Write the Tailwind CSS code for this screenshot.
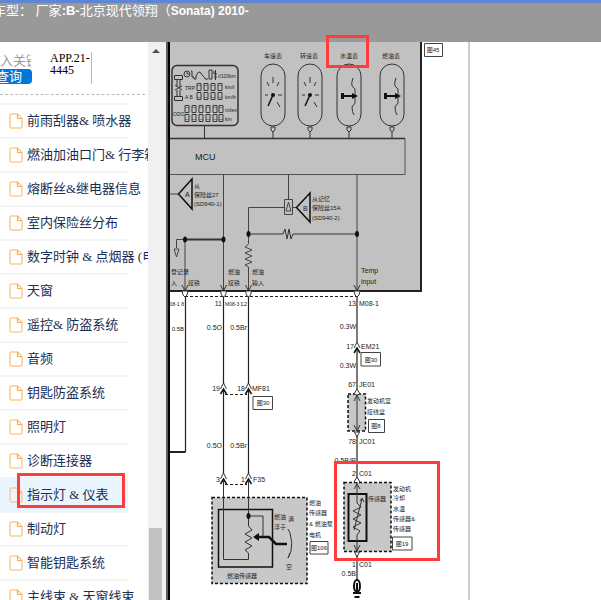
<!DOCTYPE html>
<html lang="zh-CN">
<head>
    <meta charset="UTF-8">
    <meta name="viewport" content="width=device-width, initial-scale=1.0">
    <script src="https://cdn.jsdelivr.net/npm/@tailwindcss/browser@4"></script>
    <title>北京现代领翔 Sonata</title>
</head>
<body class="h-screen flex flex-col overflow-hidden bg-white font-['Liberation_Serif','Noto_Sans_CJK_SC',sans-serif]">
    <!-- Header -->
    <header class="h-[42px] shrink-0 bg-[#999999] border-t-3 border-[#5f86d3] overflow-hidden">
        <h1 class="-ml-[7px] text-[13px] leading-4 text-white whitespace-nowrap font-['Liberation_Sans','Noto_Sans_CJK_SC',sans-serif]">车型： 厂家<b>:B-</b>北京现代领翔（<b class="text-[12px]">Sonata) 2010-</b></h1>
    </header>

    <main class="flex flex-1 min-h-0 relative">
        <!-- Sidebar -->
        <aside class="w-[148px] shrink-0 overflow-hidden text-[13px]">
            <div class="flex h-[53px] mr-[3px] pt-[10px] border-b border-dashed border-[#bbbbbb]">
                <form class="w-[50px] shrink-0">
                    <input class="block w-11 h-[17px] -ml-[13px] text-[13px] text-gray-700 placeholder:text-[#999999] focus:outline-none" type="text" placeholder="输入关键字" aria-label="关键字">
                    <button class="block w-[45px] h-[15px] -ml-[13px] pl-[9px] rounded bg-[#0078d7] text-left text-[13px] leading-[14px] text-white" type="button">查询</button>
                </form>
                <div class="w-[42px] h-8 text-[12px] leading-3 text-black border-r border-[#bbbbbb]">APP.21-<br>4445</div>
            </div>
            <ul class="mt-2 w-32 text-[#1b2d52] whitespace-nowrap" id="menu">
                <li><a href="#" class="flex items-center h-[34px] pl-[9px] gap-1 border-t-2 border-[#f4f4f4]"><svg class="size-[14px] h-4 shrink-0"><use href="#file"/></svg>前雨刮器&amp; 喷水器</a></li>
                <li><a href="#" class="flex items-center h-[34px] pl-[9px] gap-1 border-t-2 border-[#f4f4f4]"><svg class="size-[14px] h-4 shrink-0"><use href="#file"/></svg>燃油加油口门&amp; 行李箱</a></li>
                <li><a href="#" class="flex items-center h-[34px] pl-[9px] gap-1 border-t-2 border-[#f4f4f4]"><svg class="size-[14px] h-4 shrink-0"><use href="#file"/></svg>熔断丝&amp;继电器信息</a></li>
                <li><a href="#" class="flex items-center h-[34px] pl-[9px] gap-1 border-t-2 border-[#f4f4f4]"><svg class="size-[14px] h-4 shrink-0"><use href="#file"/></svg>室内保险丝分布</a></li>
                <li><a href="#" class="flex items-center h-[34px] pl-[9px] gap-1 border-t-2 border-[#f4f4f4]"><svg class="size-[14px] h-4 shrink-0"><use href="#file"/></svg>数字时钟 &amp; 点烟器 (电源)</a></li>
                <li><a href="#" class="flex items-center h-[34px] pl-[9px] gap-1 border-t-2 border-[#f4f4f4]"><svg class="size-[14px] h-4 shrink-0"><use href="#file"/></svg>天窗</a></li>
                <li><a href="#" class="flex items-center h-[34px] pl-[9px] gap-1 border-t-2 border-[#f4f4f4]"><svg class="size-[14px] h-4 shrink-0"><use href="#file"/></svg>遥控&amp; 防盗系统</a></li>
                <li><a href="#" class="flex items-center h-[34px] pl-[9px] gap-1 border-t-2 border-[#f4f4f4]"><svg class="size-[14px] h-4 shrink-0"><use href="#file"/></svg>音频</a></li>
                <li><a href="#" class="flex items-center h-[34px] pl-[9px] gap-1 border-t-2 border-[#f4f4f4]"><svg class="size-[14px] h-4 shrink-0"><use href="#file"/></svg>钥匙防盗系统</a></li>
                <li><a href="#" class="flex items-center h-[34px] pl-[9px] gap-1 border-t-2 border-[#f4f4f4]"><svg class="size-[14px] h-4 shrink-0"><use href="#file"/></svg>照明灯</a></li>
                <li><a href="#" class="flex items-center h-[34px] pl-[9px] gap-1 border-t-2 border-[#f4f4f4]"><svg class="size-[14px] h-4 shrink-0"><use href="#file"/></svg>诊断连接器</a></li>
                <!-- current page -->
                <li class="relative">
                    <a href="#" class="flex items-center h-[34px] pl-[9px] gap-1 border-t-2 border-[#eaf6ff] bg-[#eaf6ff]"><svg class="size-[14px] h-4 shrink-0"><use href="#file"/></svg>指示灯 &amp; 仪表</a>
                    <div class="absolute left-[17px] -top-1 w-[108px] h-[35px] border-3 border-[#ff3b3b]"></div>
                </li>
                <li><a href="#" class="flex items-center h-[34px] pl-[9px] gap-1 border-t-2 border-[#f4f4f4]"><svg class="size-[14px] h-4 shrink-0"><use href="#file"/></svg>制动灯</a></li>
                <li><a href="#" class="flex items-center h-[34px] pl-[9px] gap-1 border-t-2 border-[#f4f4f4]"><svg class="size-[14px] h-4 shrink-0"><use href="#file"/></svg>智能钥匙系统</a></li>
                <li><a href="#" class="flex items-center h-[34px] pl-[9px] gap-1 border-t-2 border-[#f4f4f4]"><svg class="size-[14px] h-4 shrink-0"><use href="#file"/></svg>主线束 &amp; 天窗线束</a></li>
            </ul>
        </aside>

        <!-- Scrollbar -->
        <div class="w-[18px] shrink-0 flex flex-col justify-between items-center bg-[#f0f0f0] pt-[6px] pr-[3px]">
            <svg class="w-2 h-2" viewBox="0 0 8 8"><path d="M0 5 4 1 8 5Z" fill="#505050"/></svg>
            <div class="w-[13px] h-[72px] bg-[#c1c1c1]"></div>
        </div>
        <div class="w-1 shrink-0 bg-black border-l-2 border-[#5c5c5c]"></div>

        <!-- Wiring diagram -->
        <section class="relative flex-1 min-w-0 overflow-hidden">
            <svg class="block w-[300px] h-[558px] border-r-2 border-[#cccccc] font-['Liberation_Sans_Narrow','Liberation_Sans','Noto_Sans_CJK_SC',sans-serif]" viewBox="170 42 298 558" fill="none" stroke="#333333" stroke-width="1">
                <defs>
                    <symbol id="file" viewBox="0 0 14 16">
                        <path d="M2.5 1H8.5L13 5.5V13.5Q13 15 11.5 15H2.5Q1 15 1 13.5V2.5Q1 1 2.5 1Z" fill="none" stroke="#fbcb92" stroke-width="1.5"/>
                        <path d="M8.5 1V5.5H13" fill="none" stroke="#f5ab55" stroke-width="1.2"/>
                    </symbol>
                    <!-- one digit of the LCD -->
                    <g id="seg" stroke="#3a3a3a" stroke-width="1">
                        <path d="M1 .5H5V7.500H1ZM1 9.500H5V16.500H1Z"/>
                        <path d="M1 2.500H5M1 14.500H5" stroke-width=".5"/>
                    </g>
                    <g id="speed">
                        <rect x="-12" y="-31" width="24" height="62" rx="12"/>
                        <path d="M0 -18V-12M-6 -13L-4 -9M6 -13L4 -9M-8 0H-5M5 0H9M4 7L7 12M-2 32V35L0 37L2 35V32ZM0 37V44"/>
                        <path d="M0 0L-5 11" stroke="#111" stroke-width="1.5"/>
                        <circle r="2" fill="#111" stroke="none"/>
                    </g>
                    <g id="level">
                        <rect x="-12" y="-31" width="24" height="62" rx="12"/>
                        <path d="M4 -17Q2 -12 3 -9L6 -6V8L3 12Q3 17 5 20M-2 32V35L0 37L2 35V32ZM0 37V44"/>
                        <path d="M-5 1H4" stroke="#111" stroke-width="2"/>
                        <path d="M-8 -2H-5V4H-8ZM3 -2L9 1L3 4Z" fill="#111" stroke="none"/>
                    </g>
                    <g id="plug">
                        <path d="M-3 -6L0 0L3 -6" />
                        <path d="M-3 0H3L2 4L0 6L-2 4Z" fill="#fff"/>
                    </g>
                    <g id="joint">
                        <path d="M-3 5L0 -1L3 5" fill="#fff"/>
                        <path d="M-3 10L0 5L3 10" stroke="#111" stroke-width="1.500"/>
                    </g>
                </defs>

                <!-- instrument cluster -->
                <path d="M170 42H421V291H170Z" fill="#c1c1c1" stroke="none"/>
                <path d="M421 42V291H170" stroke="#222" stroke-width="2"/>
                <rect x="172" y="65.500" width="66" height="60" rx="5" stroke-width="1.500"/>
                <g>
                    <path d="M174.500 75.500H182.500V79.500H174.500ZM177 80V87M180 80V87M175 85L182 90M175 90L182 86M177 90V96M180 90V96M174.500 96.500H182.500V100.500H174.500Z"/>
                    <circle cx="187" cy="74" r="3"/><path d="M187 72V74H189"/>
                    <path d="M191 71H192V77H194V79H196V76Q198 71 200 72L203 76L205 78V79H208M209 70H212V79H209ZM214 71V74H217M214 77H217M215.500 70V80"/>
                    <use href="#seg" x="196" y="83"/><use href="#seg" x="203" y="83"/><use href="#seg" x="210" y="83"/><use href="#seg" x="217" y="83"/>
                    <use href="#seg" x="184" y="105"/><use href="#seg" x="191" y="105"/><use href="#seg" x="198" y="105"/><use href="#seg" x="205" y="105"/><use href="#seg" x="212" y="105"/><use href="#seg" x="218" y="105"/>
                </g>
                <path d="M204.500 126V138"/>
                <use href="#speed" x="273" y="95"/>
                <use href="#speed" x="310" y="95"/>
                <use href="#level" x="349" y="95"/>
                <use href="#level" x="392" y="95"/>
                <path d="M170 138.500H405V174.500H170" stroke="#555"/>
                <path d="M170 138.500H405" stroke-width="1.500"/>

                <!-- inner wiring -->
                <path d="M170 194H178M223.500 174V290M288.500 174V199M284 207.500H248.500V244L245 247L252 250L245 253L252 256L245 259L252 262L245 265L248.500 267V290M292 207.500H296M357 174V290M176.500 248V239.500H185V290M174 249H179L176.500 257ZM284.500 199.500H292.500V214.500H284.500ZM286 211H291L288.500 202Z" stroke="#444"/>
                <path d="M248 234H283L285 229L287 239L289 229L291 239L293 234H357"/>
                <path d="M185 239.500H223" stroke-width="2"/>
                <path d="M192 179L178.500 194L192 209ZM310 193L296.500 207.500L310 222Z" stroke="#111" stroke-width="1.500"/>
                <g fill="#111" stroke="none">
                    <ellipse cx="185" cy="239.500" rx="2" ry="3"/><ellipse cx="223.500" cy="239.500" rx="2" ry="3"/>
                    <ellipse cx="248.500" cy="234" rx="2" ry="3"/><ellipse cx="357" cy="234" rx="2" ry="3"/>
                </g>

                <!-- harness lines -->
                <g stroke="#222" stroke-width="1.200">
                    <path d="M185.500 296V452H170M223.500 296V384M248.500 296V384M223.500 390V474M248.500 390V474M357 296V342M357 348V389M357 434V481M357 552V580"/>
                    <path d="M170 452H185" stroke-width="2"/>
                    <path d="M185 296.500H357M225 394.500H247M225 484.500H247" stroke-dasharray="3 2"/>
                </g>
                <use href="#plug" x="185" y="291"/><use href="#plug" x="223.500" y="291"/><use href="#plug" x="248.500" y="291"/><use href="#plug" x="357" y="291"/>
                <use href="#joint" x="223.500" y="384"/><use href="#joint" x="248.500" y="384"/>
                <use href="#joint" x="223.500" y="474"/><use href="#joint" x="248.500" y="474"/><use href="#joint" x="357" y="343"/>

                <!-- fuel sender -->
                <rect x="212" y="497.500" width="95" height="86" fill="#c8c8c8" stroke="#111" stroke-width="1.500" stroke-dasharray="3 2"/>
                <rect x="218.500" y="509.500" width="54" height="57.500" stroke="#111" stroke-width="1.500"/>
                <path d="M223.500 480V559.500H248.500V553L245 550L252 546L245 542L252 538L245 534L252 530L248.500 526V480M248.500 516H263V536M288 529L290 533M290 533Q293 543 291 551L288 558L290 553"/>
                <path d="M256 537H269L276 544H287" stroke="#111" stroke-width="2.500"/>
                <path d="M253 537L259 533V541Z" fill="#111" stroke="none"/>
                <ellipse cx="248.500" cy="516" rx="2" ry="3" fill="#111" stroke="none"/>

                <!-- junction box -->
                <rect x="348" y="394" width="17.500" height="37" fill="#c8c8c8" stroke="#111" stroke-width="1.500" stroke-dasharray="3 2"/>
                <path d="M357 394V431M354 401L357 395L360 401M354 425L357 431L360 425"/>
                <path d="M354 394L357 389L360 394M354.500 432H359.500L357 437Z" fill="#fff"/>

                <!-- coolant temperature sensor -->
                <rect x="344" y="482.500" width="47" height="69" fill="#c8c8c8" stroke="#111" stroke-width="1.500" stroke-dasharray="3 2"/>
                <rect x="348.500" y="494" width="18" height="47" stroke="#111" stroke-width="2"/>
                <path d="M357 482V503L361 507L353 511L361 515L353 519L361 523L353 527L360 531L357 535V551M354 489L357 484L360 489M354 545L357 551L360 545M354 530L362 499M360 501L362 498L364 502"/>
                <path d="M354 482L357 477L360 482M354.500 552H359.500L357 557Z" fill="#fff"/>
                <ellipse cx="357" cy="586" rx="3" ry="6" fill="#fff" stroke="#111" stroke-width="2"/>
                <path d="M357 583V592" stroke="#111" stroke-width="2"/>
                <path d="M353 593H361M354.500 597H359.500" stroke="#111" stroke-width="2"/>

                <!-- page reference boxes -->
                <path d="M424.500 43.500H442.500V56.500H424.500ZM253 396.500H272.500V409.500H253ZM361 352.500H380.500V366H361ZM368.500 419.500H384.500V432.500H368.500ZM310 541.500H328V554H310ZM392.500 537H412V550H392.500Z" fill="#fff" stroke="#444"/>

                <!-- labels -->
                <g fill="#222" stroke="none" font-size="7">
                    <text x="195" y="160" font-size="9">MCU</text>
                    <g text-anchor="middle" font-size="6">
                        <text x="273" y="58">车速表</text><text x="309" y="58">转速表</text><text x="349" y="58">水温表</text><text x="391" y="58">燃油表</text>
                    </g>
                    <g font-size="5">
                        <text x="218" y="78">ℓ/100km</text><text x="185" y="90">TRP</text><text x="185" y="99">A B</text>
                        <text x="225" y="89">km/ℓ</text><text x="225" y="99">km/h</text><text x="173" y="116">ODO</text><text x="225" y="112">miles</text><text x="225" y="121">km</text>
                    </g>
                    <text x="185" y="197">A</text><text x="303" y="211">B</text>
                    <g font-size="6">
                        <text x="194" y="188">从</text><text x="194" y="197">保险丝27</text><text x="194" y="206">(SD940-1)</text>
                        <text x="312" y="201">从记忆</text><text x="312" y="210">保险丝15A</text><text x="312" y="220">(SD940-2)</text>
                        <text x="171" y="274">登记录</text><text x="171" y="285">入</text><text x="188" y="285">接铁</text>
                        <text x="228" y="274">燃油</text><text x="228" y="285">接铁</text><text x="252" y="274">燃油</text><text x="252" y="285">输入</text>
                        <text x="225" y="306" font-size="5">M08-3</text>
                    </g>
                    <text x="361" y="273">Temp</text><text x="361" y="284">input</text>
                    <g>
                        <text x="359" y="306">M08-1</text>
                        <text x="252" y="391">MF81</text><text x="253" y="482">F35</text><text x="361" y="349">EM21</text>
                        <text x="359" y="387">JE01</text><text x="359" y="444">JC01</text><text x="359" y="476">C01</text><text x="359" y="567">C01</text>
                    </g>
                    <g text-anchor="end">
                        <text x="184" y="306" font-size="5">08-1 8</text><text x="222" y="306">11</text><text x="247" y="306" font-size="6">12</text><text x="356" y="306">13</text>
                        <text x="184" y="331" font-size="6">0.5B</text><text x="222" y="330">0.5O</text><text x="247" y="330">0.5Br</text><text x="356" y="329">0.3W</text>
                        <text x="220" y="391">19</text><text x="245" y="391">18</text><text x="354" y="349">17</text><text x="356" y="368">0.3W</text>
                        <text x="356" y="387">67</text><text x="222" y="448">0.5O</text><text x="247" y="448">0.5Br</text>
                        <text x="356" y="444">78</text><text x="356" y="463">0.5B/R</text><text x="356" y="476">2</text>
                        <text x="220" y="482">3</text><text x="245" y="482">1</text><text x="356" y="567">1</text><text x="356" y="576">0.5B</text>
                    </g>
                    <g font-size="6">
                        <text x="367" y="403">发动机室</text><text x="367" y="414">接线盒</text>
                        <text x="309" y="505">燃油</text><text x="309" y="515">传感器</text><text x="309" y="526">&amp; 燃油泵</text><text x="309" y="537">电机</text>
                        <text x="274" y="519">燃油</text><text x="274" y="529">浮子</text><text x="288" y="521">满</text><text x="286" y="569">空</text><text x="227" y="578">燃油传感器</text>
                        <text x="368" y="501">传感器</text><text x="393" y="491">发动机</text><text x="393" y="500">冷却</text><text x="393" y="511">水温</text>
                        <text x="393" y="521">传感器&amp;</text><text x="393" y="531">传感器</text>
                    </g>
                    <g font-size="6" text-anchor="middle">
                        <text x="433" y="52">图45</text><text x="263" y="405">图30</text><text x="371" y="362">图30</text>
                        <text x="376" y="428">图8</text><text x="319" y="550">图106</text><text x="402" y="546">图19</text>
                    </g>
                </g>
            </svg>
            <!-- marked sensor -->
            <div class="absolute left-[164px] top-[419px] w-[106px] h-[100px] border-3 border-[#ff3b3b]"></div>
        </section>
        <!-- marked gauge, reaches over the header -->
        <div class="absolute left-[326px] -top-[7px] w-[43px] h-[33px] border-3 border-[#ff3b3b]"></div>
    </main>
</body>
</html>
